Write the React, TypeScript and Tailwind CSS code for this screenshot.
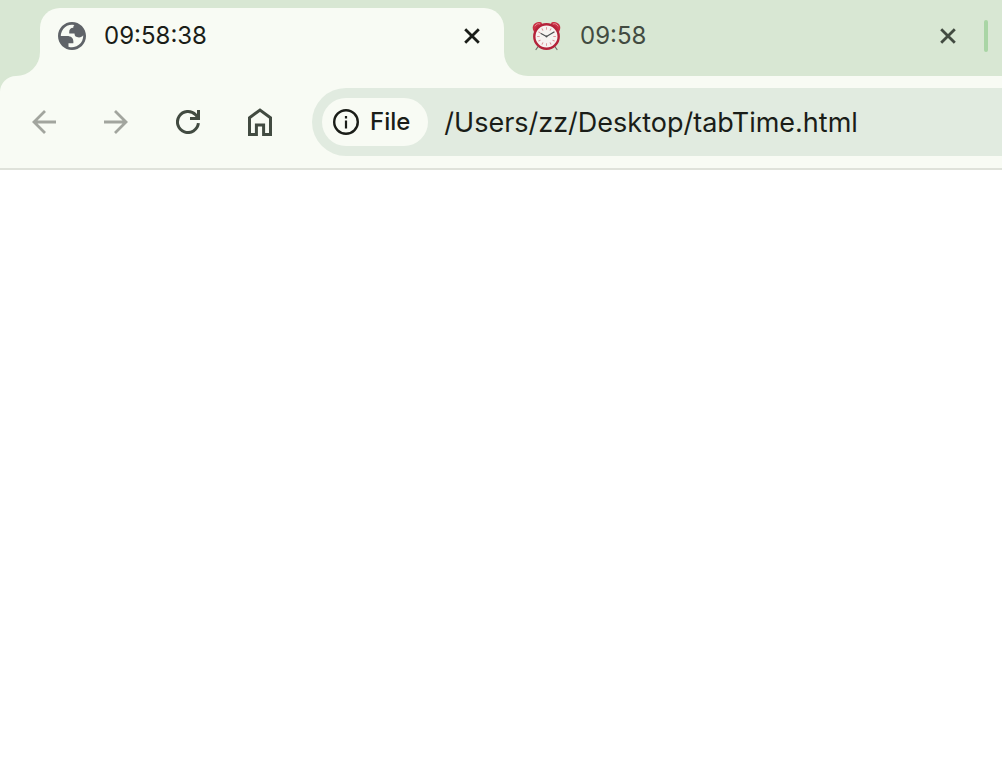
import { useState } from "react";

const TICKS = [0, 30, 60, 90, 120, 150, 180, 210, 240, 270, 300, 330];

function GlobeIcon() {
  return (
    <svg viewBox="2 2 20 20" className="size-7 shrink-0 fill-[#5f6368]" fillRule="evenodd" aria-hidden="true">
      <path d="M12 2C6.48 2 2 6.48 2 12s4.48 10 10 10 10-4.48 10-10S17.52 2 12 2zM4 12h4.4c3.407.022 4.922 1.73 4.543 5.127H9.488v2.47a8.004 8.004 0 0 0 10.498-8.083C19.327 12.504 18.332 13 17 13c-2.137 0-3.206-.916-3.206-2.75h-3.748c-.274-2.728.683-4.092 2.87-4.092 0-.975.327-1.597.811-1.97A8.004 8.004 0 0 0 4 12z" />
    </svg>
  );
}

function AlarmClockIcon() {
  return (
    <svg viewBox="0 0 32 32" className="size-8 shrink-0" fill="none" strokeLinecap="round" aria-hidden="true">
      <path d="M8.5 26l-2.5 3.5M24.5 26l2.5 3.5" stroke="#6f6a68" strokeWidth="1.2" />
      <path d="M3 9.5c-1.5-4.5 3-9 8.500-7l1 2.500-8.500 7z" fill="#c92f43" />
      <path d="M30 9.5c1.500-4.500-3-9-8.500-7l-1 2.500 8.500 7z" fill="#c92f43" />
      <path d="M5 6c1-2 3-3 5-2M28 6c-1-2-3-3-5-2" stroke="#e58a93" strokeWidth="1" />
      <circle cx="16.5" cy="16.5" r="12.2" fill="#f6f3f1" stroke="#b4233a" strokeWidth="2.4" />
      {TICKS.map((deg) => (
        <path key={deg} d="M16.5 7.5v1.8" stroke="#dc8f95" strokeWidth="0.9" transform={`rotate(${deg} 16.5 16.5)`} />
      ))}
      <path d="M16.500 16.500l-5.500-3M16.500 16.500l7.500-4.500" stroke="#4b4e50" strokeWidth="1.1" />
      <circle cx="16.5" cy="16.5" r="0.9" fill="#4b4e50" />
    </svg>
  );
}

function CloseIcon() {
  return (
    <svg viewBox="0 0 16 16" className="size-4" fill="none" stroke="currentColor" strokeWidth="2.8" aria-hidden="true">
      <path d="M1.2 1.2l13.6 13.6M14.8 1.2L1.2 14.8" />
    </svg>
  );
}

function BackIcon() {
  return (
    <svg viewBox="0 0 24 24" className="size-6" fill="none" stroke="currentColor" strokeWidth="2.8" aria-hidden="true">
      <path d="M24 12H2M13 1L2 12l11 11" />
    </svg>
  );
}

function ForwardIcon() {
  return (
    <svg viewBox="0 0 24 24" className="size-6" fill="none" stroke="currentColor" strokeWidth="2.8" aria-hidden="true">
      <path d="M0 12h22M11 1l11 11-11 11" />
    </svg>
  );
}

function ReloadIcon() {
  return (
    <svg viewBox="0 0 24 24" className="size-6" fill="none" stroke="currentColor" strokeWidth="3" aria-hidden="true">
      <path d="M22.4 13.2A10.5 10.5 0 1 1 19.6 4.8L22 7.4" />
      <path d="M22.5 0v8.5H14" />
    </svg>
  );
}

function HomeIcon() {
  return (
    <svg viewBox="0 0 24 28" className="h-7 w-6" fill="none" stroke="currentColor" strokeWidth="3" aria-hidden="true">
      <path d="M1.5 26.5V9.8L12 2l10.5 7.8v16.7h-6.9V17H8.4v9.5z" />
    </svg>
  );
}

function InfoIcon() {
  return (
    <svg viewBox="0 0 26 26" className="size-[26px] shrink-0" fill="none" stroke="currentColor" aria-hidden="true">
      <circle cx="13" cy="13" r="11.8" strokeWidth="2.4" />
      <path d="M13 11.5v8M13 7v2.4" strokeWidth="2.2" />
    </svg>
  );
}

const NAV = [
  { name: "Back", Icon: BackIcon, disabled: true },
  { name: "Forward", Icon: ForwardIcon, disabled: true },
  { name: "Reload", Icon: ReloadIcon, disabled: false },
  { name: "Home", Icon: HomeIcon, disabled: false },
];

export default function App() {
  const [url, setUrl] = useState("/Users/zz/Desktop/tabTime.html");

  return (
    <div className="min-h-screen overflow-hidden bg-white font-['Inter','Liberation_Sans',sans-serif] text-[#1a1d18]">
      <header className="bg-[#d8e7d3]">
        {/* the light strip behind shows through the rounded corners as the tab's flared feet */}
        <div className="flex h-[76px] bg-[#f8fbf4]">
          <div className="w-10 shrink-0 rounded-br-3xl bg-[#d8e7d3]" />
          <div className="w-[464px] shrink-0 bg-[#d8e7d3] pt-2">
            <div className="flex h-full items-center rounded-t-[20px] bg-[#f8fbf4] pr-6 pb-3 pl-[18px]">
              <button type="button" className="flex flex-1 items-center gap-[18px] text-2xl">
                <GlobeIcon />
                09:58:38
              </button>
              <button type="button" aria-label="Close tab">
                <CloseIcon />
              </button>
            </div>
          </div>
          <div className="flex min-w-0 flex-1 items-center rounded-bl-3xl bg-[#d8e7d3] pt-2 pb-3 pl-[26px] text-[#424b41]">
            <button type="button" className="flex flex-1 items-center gap-[18px] text-2xl">
              <AlarmClockIcon />
              09:58
            </button>
            <button type="button" aria-label="Close tab">
              <CloseIcon />
            </button>
            <div className="mr-[14px] ml-7 h-8 w-1 rounded-full bg-[#a9d5a5]" />
          </div>
        </div>

        <div className="flex items-center rounded-tl-2xl border-b-2 border-[#dfe2da] bg-[#f8fbf4] py-3 pl-8">
          <nav className="flex shrink-0 items-center gap-12 pr-10 text-[#424b41]">
            {NAV.map(({ name, Icon, disabled }) => (
              <button
                key={name}
                type="button"
                aria-label={name}
                disabled={disabled}
                className="disabled:text-[#a2a59e]"
              >
                <Icon />
              </button>
            ))}
          </nav>
          <div className="flex h-[68px] min-w-0 flex-1 items-center gap-4 rounded-l-full bg-[#e1ebe0] pl-[10px]">
            <button
              type="button"
              className="flex h-12 shrink-0 items-center gap-[11px] rounded-full bg-[#f8fbf4] pr-[18px] pl-[11px] text-2xl font-medium"
            >
              <InfoIcon />
              File
            </button>
            <input
              type="text"
              aria-label="Address"
              value={url}
              onChange={(e) => setUrl(e.target.value)}
              className="h-12 min-w-0 flex-1 bg-transparent text-[27px] outline-none"
            />
          </div>
        </div>
      </header>
      <main />
    </div>
  );
}
